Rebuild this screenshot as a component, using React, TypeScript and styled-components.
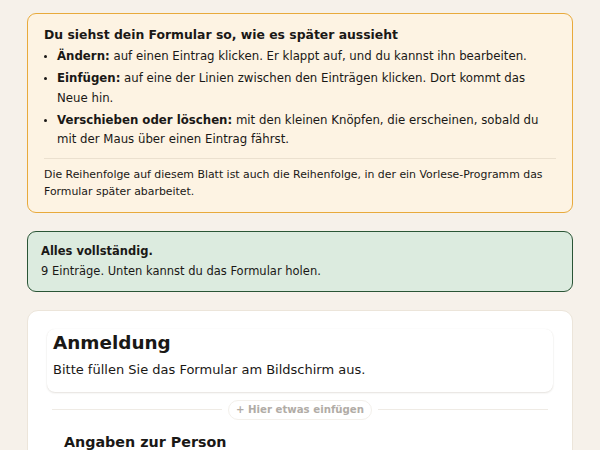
import React from 'react';
import styled, { createGlobalStyle } from 'styled-components';

const GlobalStyle = createGlobalStyle`
  html, body {
    margin: 0;
    padding: 0;
    background: #f6f1ea;
    font-family: "DejaVu Sans", "Liberation Sans", sans-serif;
    color: #1a1816;
  }
`;

const Page = styled.div`
  padding: 13px 27px;
  display: flex;
  flex-direction: column;
  gap: 18px;
`;

const Hint = styled.section`
  background: #fdf3e3;
  border: 1px solid #e8aa3c;
  border-radius: 9px;
  padding: 11px 16px 12px;
`;

const HintTitle = styled.h2`
  margin: 0 0 2px;
  font-size: 12.4px;
  line-height: 20px;
  font-weight: bold;
`;

const List = styled.ul`
  margin: 0;
  padding: 0 0 0 13px;
  font-size: 11.75px;
  line-height: 19.5px;
`;

const Item = styled.li`
  margin-bottom: 2.5px;
  &::marker {
    font-size: 10px;
  }
`;

const Divider = styled.hr`
  border: none;
  border-top: 1px solid #ebe0cf;
  margin: 8px 0 7px;
`;

const Footnote = styled.p`
  margin: 0;
  font-size: 10.9px;
  line-height: 17px;
`;

const Status = styled.section`
  background: #dcebdf;
  border: 1px solid #2a5536;
  border-radius: 9px;
  padding: 9px 13px 10px;
  font-size: 11.5px;
  line-height: 20px;
`;

const StatusTitle = styled.div`
  font-weight: bold;
`;

const Card = styled.section`
  background: #ffffff;
  border: 1px solid #ece5da;
  border-radius: 11px;
  padding: 18px 19px;
`;

const Header = styled.div`
  border-radius: 8px;
  box-shadow: 0 1px 2px rgba(80, 60, 30, 0.14), 0 0 1px rgba(80, 60, 30, 0.08);
  padding: 1px 6px 12px;
`;

const Heading = styled.h1`
  margin: 0 0 4px;
  font-size: 18.4px;
  line-height: 26px;
  font-weight: bold;
`;

const Lead = styled.p`
  margin: 0;
  font-size: 13px;
  line-height: 20px;
`;

const InsertRow = styled.div`
  display: flex;
  align-items: center;
  gap: 6px;
  margin: 8px 5px 0;
  &::before,
  &::after {
    content: "";
    flex: 1;
    border-top: 1px solid #efebe5;
  }
`;

const InsertButton = styled.button`
  font-family: inherit;
  font-size: 10.2px;
  font-weight: bold;
  line-height: 16px;
  color: #b1aca6;
  background: #ffffff;
  border: 1px solid #f3f0eb;
  border-radius: 10px;
  padding: 1px 7px;
  cursor: pointer;
`;

const Section = styled.div`
  padding: 11px 17px 0;
`;

const SectionTitle = styled.h3`
  margin: 0;
  font-size: 14.3px;
  line-height: 22px;
  font-weight: bold;
`;

export default function App() {
  return (
    <>
      <GlobalStyle />
      <Page>
        <Hint>
          <HintTitle>Du siehst dein Formular so, wie es später aussieht</HintTitle>
          <List>
            <Item>
              <b>Ändern:</b> auf einen Eintrag klicken. Er klappt auf, und du kannst ihn bearbeiten.
            </Item>
            <Item>
              <b>Einfügen:</b> auf eine der Linien zwischen den Einträgen klicken. Dort kommt das Neue hin.
            </Item>
            <Item>
              <b>Verschieben oder löschen:</b> mit den kleinen Knöpfen, die erscheinen, sobald du mit der Maus über einen Eintrag fährst.
            </Item>
          </List>
          <Divider />
          <Footnote>
            Die Reihenfolge auf diesem Blatt ist auch die Reihenfolge, in der ein Vorlese-Programm das Formular später abarbeitet.
          </Footnote>
        </Hint>
        <Status>
          <StatusTitle>Alles vollständig.</StatusTitle>
          <div>9 Einträge. Unten kannst du das Formular holen.</div>
        </Status>
        <Card>
          <Header>
            <Heading>Anmeldung</Heading>
            <Lead>Bitte füllen Sie das Formular am Bildschirm aus.</Lead>
          </Header>
          <InsertRow>
            <InsertButton>+ Hier etwas einfügen</InsertButton>
          </InsertRow>
          <Section>
            <SectionTitle>Angaben zur Person</SectionTitle>
          </Section>
        </Card>
      </Page>
    </>
  );
}
